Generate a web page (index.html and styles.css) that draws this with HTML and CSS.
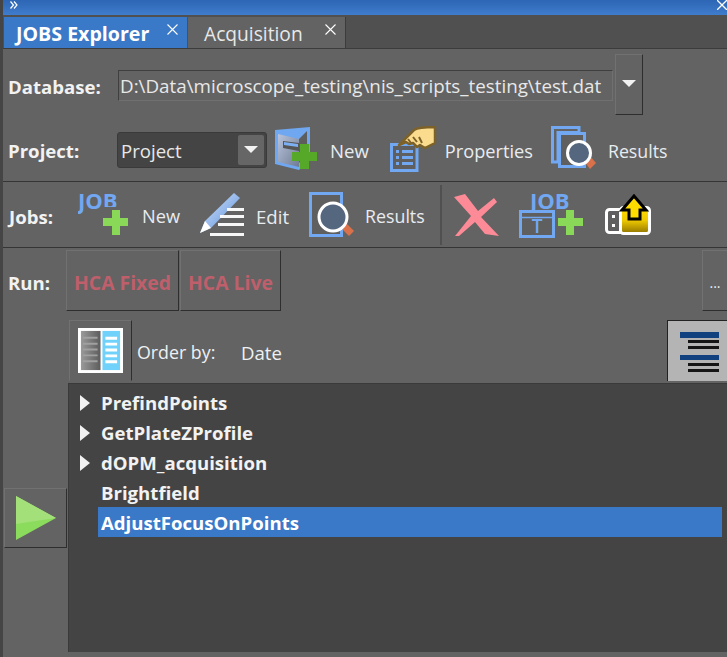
FILE: index.html
```html
<!DOCTYPE html>
<html lang="en">
<head>
    <meta charset="UTF-8">
    <meta name="viewport" content="width=device-width, initial-scale=1.0">
    <title>JOBS Explorer</title>
    <link rel="stylesheet" href="styles.css">
</head>
<body>
    <div class="titlebar">
        <svg class="icon" width="8" height="8" viewBox="0 0 8 8"><path d="M.5 .5 L3.500 4 L.5 7.500 M4 .5 L7 4 L4 7.500" fill="none" stroke="#fff" stroke-width="1.200"/></svg>
        <svg class="icon title-close" width="10" height="10" viewBox="0 0 10 10"><path d="M0 0 L10 10 M10 0 L0 10" stroke="#fff" stroke-width="1.300"/></svg>
    </div>
    <div class="tabs">
        <div class="tab tab-active">
            <span>JOBS Explorer</span>
            <svg class="tab-close" width="11" height="11" viewBox="0 0 11 11"><path d="M.5 .5 L10.500 10.500 M10.500 .5 L.5 10.500" stroke="#fff" stroke-width="1.100"/></svg>
        </div>
        <div class="tab tab-plain">
            <span>Acquisition</span>
            <svg class="tab-close" width="11" height="11" viewBox="0 0 11 11"><path d="M.5 .5 L10.500 10.500 M10.500 .5 L.5 10.500" stroke="#fff" stroke-width="1.100"/></svg>
        </div>
    </div>
    <div class="content">
        <div class="row row-db">
            <label class="row-label label-wide">Database:</label>
            <div class="path-input">D:\Data\microscope_testing\nis_scripts_testing\test.dat</div>
            <div class="path-drop"><span class="arrow-down"></span></div>
        </div>
        <div class="row row-project">
            <label class="row-label label-wide">Project:</label>
            <div class="combo"><span class="combo-text">Project</span><span class="combo-btn"><span class="arrow-down"></span></span></div>
            <svg class="icon ic-newproj" width="46" height="44" viewBox="0 0 46 44">
                <defs><linearGradient id="door" x1="0" y1="0" x2="1" y2="1"><stop offset="0" stop-color="#b9c4dc"/><stop offset="1" stop-color="#6f7a94"/></linearGradient></defs>
                <path d="M0 3 L35 0 V30 L24 43 L0 37 Z" fill="#6fa8f0"/>
                <path d="M3 7 L24 12 V40 L3 35 Z" fill="url(#door)"/>
                <path d="M24 12 L32 4 V26 L24 36 Z" fill="#5d5d5d"/>
                <path d="M8 14 L24 16 V24 L8 21 Z" fill="#555"/>
                <path d="M9 15 L23 17 V20 L9 18 Z" fill="#7db0f2"/>
                <path d="M25 17 H34 V25 H42 V34 H34 V42 H25 V34 H17 V25 H25 Z" fill="#55a828"/>
            </svg>
            <span class="btn-text txt-new1">New</span>
            <svg class="icon ic-props" width="48" height="46" viewBox="0 0 48 46">
                <path d="M1.500 18.500 H27 V44.500 H1.500 Z" fill="#5f5f5f" stroke="#72a8f2" stroke-width="3"/>
                <path d="M6 24h3v3H6zM12 24h11v3H12zM6 30h3v3H6zM12 30h11v3H12zM6 36h3v3H6zM12 36h11v3H12z" fill="#72a8f2"/>
                <path d="M9 19 L24 4 Q28 1 45 1 V17 L35 22 L30 19 L27 21 L23 17 L19 18 L16 16 Z" fill="#fbdc8e" stroke="#7c6228" stroke-width="2.500" stroke-linejoin="round"/>
                <path d="M18 13l3 4M23 11l4 5M29 11l3 6" stroke="#7c6228" stroke-width="2"/>
            </svg>
            <span class="btn-text txt-props">Properties</span>
            <svg class="icon ic-results" width="46" height="46" viewBox="0 0 46 46">
                <path d="M1.500 1.500 H28 V6.500 H7 V36 H1.500 Z" fill="none" stroke="#72a8f2" stroke-width="3"/>
                <rect x="8.500" y="7.500" width="25" height="33" fill="#5f5f5f" stroke="#72a8f2" stroke-width="3"/>
                <path d="M32 34 L38 29 L45 37 L39 43 Z" fill="#d9714a"/>
                <circle cx="28" cy="27" r="11.500" fill="#54677f" stroke="#fff" stroke-width="3"/>
            </svg>
            <span class="btn-text txt-res1">Results</span>
        </div>
        <div class="row row-jobs">
            <label class="row-label">Jobs:</label>
            <svg class="icon ic-newjob" width="52" height="60" viewBox="0 -7 52 60">
                <text x="0" y="17" class="svg-job">JOB</text>
                <rect x="25" y="15" width="16" height="3" fill="#636363"/>
                <path d="M34 18 H42 V26 H50 V34 H42 V43 H34 V34 H25 V26 H34 Z" fill="#8ad858"/>
            </svg>
            <span class="btn-text txt-new2">New</span>
            <svg class="icon ic-edit" width="46" height="46" viewBox="0 0 46 46">
                <defs><linearGradient id="pen" x1="0" y1="0" x2="1" y2="1"><stop offset="0" stop-color="#d5e4fa"/><stop offset="1" stop-color="#5a8fdc"/></linearGradient></defs>
                <path d="M1 41 L6 29 L35 1 L41 6 L12 36 Z" fill="url(#pen)"/>
                <path d="M1 41 L6 29 L12 36 Z" fill="#fff"/>
                <path d="M28 16h17v3H28zM21 23h24v3H21zM19 31h26v3H19zM11 41h34v3H11z" fill="#fff" opacity=".95"/>
            </svg>
            <span class="btn-text txt-edit">Edit</span>
            <svg class="icon ic-jobres" width="46" height="46" viewBox="0 0 46 46">
                <rect x="1.500" y="1.500" width="31" height="42" fill="#5f5f5f" stroke="#72a8f2" stroke-width="3"/>
                <path d="M32 36 L37 31 L45 39 L40 44 Z" fill="#d9714a"/>
                <circle cx="24" cy="25" r="14" fill="#54677f" stroke="#fff" stroke-width="3"/>
            </svg>
            <span class="btn-text txt-res2">Results</span>
            <span class="vsep"></span>
            <svg class="icon ic-del" width="46" height="42" viewBox="0 0 46 42">
                <path d="M0 3 L11 0 L24 17 L40 4 L43 8 L27 23 L45 42 L31 40 L21 28 L5 42 L1 42 L17 22 Z" fill="#fc8b97"/>
            </svg>
            <svg class="icon ic-jobt" width="66" height="60" viewBox="0 -7 66 60">
                <text x="11" y="17" class="svg-job">JOB</text>
                <rect x="1.500" y="19.500" width="33" height="25" fill="#5f5f5f" stroke="#72a8f2" stroke-width="3"/>
                <path d="M3 25.500 H33" stroke="#72a8f2" stroke-width="1.500"/>
                <text x="18" y="41" text-anchor="middle" class="svg-t">T</text>
                <path d="M47 18 H55 V26 H64 V34 H55 V43 H47 V34 H39 V26 H47 Z" fill="#8ad858"/>
            </svg>
            <svg class="icon ic-usb" width="46" height="42" viewBox="0 0 46 42">
                <defs><linearGradient id="gold" x1="0" y1="0" x2="0" y2="1"><stop offset="0" stop-color="#ffdb00"/><stop offset=".5" stop-color="#eec800"/><stop offset="1" stop-color="#8f7400"/></linearGradient></defs>
                <rect x="1.500" y="15.500" width="22" height="23" rx="3" fill="#5f5f5f" stroke="#fff" stroke-width="3"/>
                <path d="M7 21h3v3H7zM7 30h3v3H7z" fill="#fff"/>
                <rect x="15.500" y="13.500" width="29" height="26" rx="3" fill="url(#gold)" stroke="#fff" stroke-width="3"/>
                <path d="M29 2 L41 16 H35 V25 H24 V16 H17 Z" fill="#ffdb00" stroke="#000" stroke-width="3" stroke-linejoin="miter"/>
            </svg>
        </div>
        <div class="row row-run">
            <label class="row-label">Run:</label>
            <button class="run-btn run-fixed">HCA Fixed</button>
            <button class="run-btn run-live">HCA Live</button>
            <button class="run-btn run-more">...</button>
        </div>
        <div class="row row-order">
            <div class="order-btn">
                <svg width="45" height="45" viewBox="0 0 46 46">
                    <defs><linearGradient id="side" x1="0" y1="0" x2="1" y2="0"><stop offset="0" stop-color="#9a9a9a"/><stop offset="1" stop-color="#5c5c5c"/></linearGradient></defs>
                    <rect x="0" y="0" width="46" height="46" fill="#fff"/>
                    <rect x="3" y="3" width="20" height="40" fill="url(#side)"/>
                    <rect x="25" y="3" width="18" height="40" fill="#70d2fa"/>
                    <path d="M5 9h15v2H5zM5 15h15v2H5zM5 21h15v2H5zM5 27h15v2H5zM5 33h15v2H5z" fill="#a0a0a0"/>
                    <path d="M28 9h12v3H28zM28 15h12v3H28zM28 21h12v3H28zM28 27h12v3H28zM28 33h12v3H28z" fill="#fff"/>
                </svg>
            </div>
            <span class="order-label">Order by:</span>
            <span class="order-value">Date</span>
            <div class="sort-btn">
                <svg width="40" height="42" viewBox="0 0 40 42">
                    <path d="M0 0h39v6H0zM0 23h39v5H0z" fill="#11427f"/>
                    <path d="M8 8h31v3H8zM8 14h31v3H8zM8 31h31v3H8zM8 37h31v3H8z" fill="#151515"/>
                </svg>
            </div>
        </div>
        <div class="row-bottom">
            <div class="play-col">
                <div class="play-btn">
                    <svg width="42" height="46" viewBox="0 0 42 46">
                        <path d="M1 1 L41 23 L1 45 Z" fill="#8bdc5c"/>
                        <path d="M1 1 L41 23 Q20 26 1 29 Z" fill="#a3e07a"/>
                    </svg>
                </div>
            </div>
            <div class="job-list">
                <div class="job-item"><span class="tree-arrow"></span>PrefindPoints</div>
                <div class="job-item"><span class="tree-arrow"></span>GetPlateZProfile</div>
                <div class="job-item"><span class="tree-arrow"></span>dOPM_acquisition</div>
                <div class="job-item">Brightfield</div>
                <div class="job-item job-selected">AdjustFocusOnPoints</div>
            </div>
        </div>
    </div>
</body>
</html>
```

FILE: styles.css
```css
html, body {
    margin: 0;
    padding: 0;
    height: 657px;
    overflow: hidden;
}
body {
    font-family: "Open Sans", "Noto Sans", sans-serif;
    font-size: 18.6px;
    color: #eef0f2;
    background-color: #636363;
    border-left: 3px solid #454545;
    box-sizing: border-box;
}
.titlebar {
    height: 15px;
    box-sizing: border-box;
    padding: 1px 0 0 7px;
    display: flex;
    justify-content: space-between;
    background: linear-gradient(#2c66b4, #3f7ccc);
}
.title-close {
    margin-top: -1px;
}
.tabs {
    height: 31px;
    padding-top: 2px;
    padding-left: 1px;
    display: flex;
    background-color: #505050;
    border-bottom: 1px solid #3c3c3c;
}
.tab {
    height: 31px;
    display: flex;
    align-items: center;
    justify-content: space-between;
    box-sizing: border-box;
    padding-top: 2px;
    padding-right: 9px;
}
.tab-active {
    width: 183px;
    padding-left: 12px;
    background-color: #3a78c8;
    font-size: 19.6px;
    font-weight: 700;
    color: #fff;
}
.tab-plain {
    width: 158px;
    margin-left: 1px;
    padding-left: 16px;
    background-color: #636363;
    border-right: 1px solid #3c3c3c;
    font-size: 19.2px;
    color: #e8e8e8;
}
.tab-close {
    margin-bottom: 9px;
}
.row {
    display: flex;
    align-items: center;
    box-sizing: border-box;
}
.row-label {
    flex: none;
    width: 51px;
    margin-left: 5px;
    font-weight: 700;
    color: #f2f2f2;
}
.label-wide {
    width: 101px;
}
.icon {
    flex: none;
    display: block;
}
.btn-text {
    color: #e8ecf0;
}

/* database row */
.row-db {
    height: 71px;
    padding-top: 5px;
}
.row-db .row-label {
    margin-bottom: 2px;
}
.path-input {
    margin-left: 9px;
    margin-top: -3px;
    width: 495px;
    height: 31px;
    box-sizing: border-box;
    border: 1px solid #3f3f3f;
    border-right-color: #707070;
    border-bottom-color: #707070;
    font-size: 18.8px;
    line-height: 31px;
    padding-left: 1px;
    white-space: nowrap;
    overflow: hidden;
    color: #e8e8e8;
}
.path-drop {
    align-self: flex-start;
    margin-left: 2px;
    width: 28px;
    height: 61px;
    box-sizing: border-box;
    padding-bottom: 3px;
    border: 1px solid #717171;
    border-right-color: #2e2e2e;
    border-bottom-color: #2e2e2e;
    display: flex;
    align-items: center;
    justify-content: center;
}
.arrow-down {
    display: block;
    width: 0;
    height: 0;
    border-left: 7px solid transparent;
    border-right: 7px solid transparent;
    border-top: 7px solid #f2f2f2;
}

/* project row */
.row-project {
    height: 62px;
    padding-top: 2px;
    border-bottom: 1px solid #353535;
}
.row-project .row-label,
.row-project .btn-text {
    margin-bottom: 2px;
}
.combo {
    flex: none;
    margin-left: 8px;
    margin-bottom: 4px;
    width: 150px;
    height: 36px;
    box-sizing: border-box;
    padding: 2px;
    display: flex;
    justify-content: space-between;
    background-color: #444;
    border: 1px solid #3a3a3a;
    border-radius: 3px;
}
.combo-text {
    padding-left: 1px;
    padding-top: 2px;
    line-height: 28px;
    color: #e8e8e8;
}
.combo-btn {
    width: 26px;
    background-color: #666;
    border-radius: 2px;
    display: flex;
    align-items: center;
    justify-content: center;
}
.row-project .icon {
    margin-bottom: 6px;
}
.ic-newproj { margin-left: 8px; }
.txt-new1 { margin-left: 9px; }
.ic-props { margin-left: 21px; }
.txt-props { margin-left: 7px; font-size: 18.2px; }
.ic-results { margin-left: 18px; }
.txt-res1 { margin-left: 11px; font-size: 17.8px; }

/* jobs row */
.row-jobs {
    height: 66px;
    border-bottom: 1px solid #353535;
}
.row-jobs .row-label {
    width: 50px;
    margin-left: 6px;
}
.row-jobs .row-label,
.row-jobs .btn-text {
    margin-top: 3px;
}
.svg-job {
    font-family: "Open Sans", sans-serif;
    font-weight: 700;
    font-size: 22px;
    fill: #72a8f2;
}
.svg-t {
    font-family: "Open Sans", sans-serif;
    font-weight: 600;
    font-size: 19px;
    fill: #72a8f2;
}
.ic-newjob { margin-left: 19px; }
.txt-new2 { margin-left: 12px; font-size: 18.2px; }
.ic-edit { margin-left: 19px; }
.txt-edit { margin-left: 11px; }
.ic-jobres { margin-left: 20px; }
.txt-res2 { margin-left: 10px; font-size: 17.8px; }
.vsep {
    flex: none;
    width: 2px;
    height: 60px;
    margin-left: 15px;
    background-color: #505050;
}
.ic-del { margin-left: 12px; }
.ic-jobt { margin-left: 19px; }
.ic-usb { margin-left: 20px; }

/* run row */
.row-run {
    height: 72px;
    padding-top: 2px;
    padding-bottom: 9px;
}
.row-run .row-label {
    margin-top: 4px;
}
.run-btn {
    flex: none;
    height: 61px;
    padding: 4px 0 0;
    box-sizing: border-box;
    background-color: #636363;
    border: 1px solid #717171;
    border-right-color: #2e2e2e;
    border-bottom-color: #2e2e2e;
    font-family: inherit;
    font-size: 19.4px;
    font-weight: 700;
    color: #bf5f6c;
}
.run-fixed {
    width: 113px;
    margin-left: 7px;
}
.run-live {
    width: 101px;
    margin-left: 1px;
}
.run-more {
    width: 25px;
    margin-left: auto;
    font-weight: 400;
    font-size: 14px;
    color: #f0f0f0;
    border-right: none;
}

/* order row */
.row-order {
    height: 63px;
    align-items: flex-start;
}
.order-btn {
    flex: none;
    width: 63px;
    height: 61px;
    margin-left: 66px;
    box-sizing: border-box;
    border: 1px solid #717171;
    border-right-color: #2e2e2e;
    border-bottom-color: #636363;
    display: flex;
    align-items: center;
    justify-content: center;
}
.order-label {
    width: 81px;
    margin-left: 5px;
    padding-top: 2px;
    font-size: 17.8px;
    line-height: 61px;
}
.order-value {
    margin-left: 23px;
    padding-top: 2px;
    line-height: 61px;
}
.sort-btn {
    width: 60px;
    height: 61px;
    margin-left: auto;
    box-sizing: border-box;
    padding: 11px 0 0 12px;
    background-color: #b4b4b4;
    border-top: 1px solid #222;
    border-left: 1px solid #222;
}
.sort-btn svg {
    display: block;
}

/* tree */
.row-bottom {
    display: flex;
    height: 269px;
}
.play-col {
    width: 65px;
    padding-top: 105px;
    flex: none;
}
.play-btn {
    width: 63px;
    height: 60px;
    margin-left: 1px;
    box-sizing: border-box;
    border: 1px solid #717171;
    border-right-color: #2e2e2e;
    border-bottom-color: #2e2e2e;
    display: flex;
    align-items: center;
    justify-content: center;
}
.job-list {
    flex: 1;
    box-sizing: border-box;
    padding: 3px 5px 0 29px;
    background-color: #444;
    border-top: 1px solid #3a3a3a;
    border-left: 1px solid #3a3a3a;
}
.job-item {
    height: 30px;
    line-height: 32px;
    padding-left: 3px;
    font-weight: 700;
    color: #f2f2f2;
    position: relative;
}
.job-selected {
    background-color: #3a78c8;
    color: #fff;
}
.tree-arrow {
    position: absolute;
    left: -18px;
    top: 8px;
    width: 0;
    height: 0;
    border-top: 8px solid transparent;
    border-bottom: 8px solid transparent;
    border-left: 10px solid #f2f2f2;
}
```
